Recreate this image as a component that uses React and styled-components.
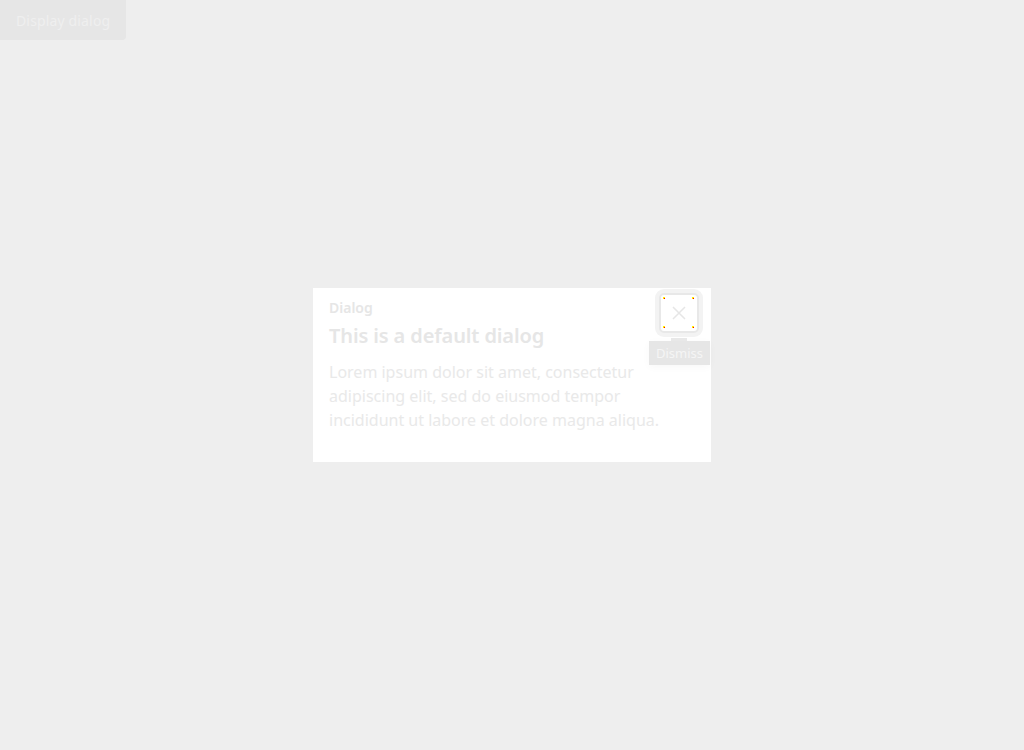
import React from "react";
import styled, { createGlobalStyle } from "styled-components";

const Global = createGlobalStyle`
  html, body { margin: 0; padding: 0; background: #eeeeee; }
  body { font-family: "Noto Sans", "Open Sans", sans-serif; }
  #root { min-height: 100vh; }
  * { box-sizing: border-box; }
`;

const Page = styled.div`
  position: relative;
  width: 100%;
  height: 750px;
  background: #eeeeee;
`;

const TriggerButton = styled.button`
  display: block;
  height: 40px;
  padding: 0 16px;
  border: none;
  border-radius: 0 0 4px 0;
  background: #e6e6e6;
  color: #efefef;
  font-family: "Noto Sans", sans-serif;
  font-size: 14px;
  letter-spacing: 0.15px;
  cursor: pointer;
`;

const Overlay = styled.div`
  position: absolute;
  inset: 0;
  display: flex;
  align-items: center;
  justify-content: center;
`;

const DialogBox = styled.div`
  position: relative;
  width: 398px;
  height: 174px;
  background: #ffffff;
  padding: 10px 16px 16px 16px;
  display: flex;
  flex-direction: column;
`;

const Eyebrow = styled.div`
  font-size: 14px;
  font-weight: 600;
  line-height: 20px;
  color: #e6e6e6;
`;

const Title = styled.h2`
  margin: 4px 0 0 0;
  font-size: 20px;
  font-weight: 600;
  line-height: 28px;
  letter-spacing: -0.12px;
  color: #e6e6e6;
`;

const Body = styled.p`
  margin: 10px 0 0 0;
  font-size: 16px;
  line-height: 24px;
  color: #e9e9e9;
  width: 345px;
`;

const CloseWrap = styled.div`
  position: absolute;
  top: 5px;
  right: 1px;
  display: flex;
  flex-direction: column;
  align-items: center;
`;

const CloseButton = styled.button`
  position: relative;
  width: 40px;
  height: 40px;
  border: 2px solid #e8e8e8;
  border-radius: 5px;
  background: #ffffff;
  box-shadow: 0 0 0 4px #f3f3f3;
  display: flex;
  align-items: center;
  justify-content: center;
  padding: 0;
  cursor: pointer;
`;

const Dot = styled.span`
  position: absolute;
  width: 1px;
  height: 1px;
  background: #ff0000;
  box-shadow: -1px -1px 0 0 #ffee00, 0 -1px 0 0 #ffee00, -1px 0 0 0 #ffee00;
  ${(p) => (p.$top ? "top: 3px;" : "bottom: 3px;")}
  ${(p) => (p.$left ? "left: 3px;" : "right: 3px;")}
`;

const Tooltip = styled.div`
  position: relative;
  margin-top: 8px;
  padding: 0 7px;
  height: 24px;
  line-height: 24px;
  background: #e6e6e6;
  color: #f5f5f5;
  font-size: 13px;
  box-shadow: 0 2px 8px rgba(0, 0, 0, 0.03);
  white-space: nowrap;
  &::before {
    content: "";
    position: absolute;
    top: -3px;
    left: 50%;
    margin-left: -8px;
    width: 16px;
    height: 3px;
    background: #e8e8e8;
  }
`;

export default function App() {
  return (
    <>
      <Global />
      <Page>
        <TriggerButton>Display dialog</TriggerButton>
        <Overlay>
          <DialogBox role="dialog">
            <Eyebrow>Dialog</Eyebrow>
            <Title>This is a default dialog</Title>
            <Body>
              Lorem ipsum dolor sit amet, consectetur adipiscing elit, sed do
              eiusmod tempor incididunt ut labore et dolore magna aliqua.
            </Body>
            <CloseWrap>
              <CloseButton aria-label="Dismiss">
                <Dot $top $left />
                <Dot $top />
                <Dot $left />
                <Dot />
                <svg width="14" height="14" viewBox="0 0 14 14">
                  <path
                    d="M1 1 L13 13 M13 1 L1 13"
                    stroke="#e6e6e6"
                    strokeWidth="1.5"
                    fill="none"
                  />
                </svg>
              </CloseButton>
              <Tooltip>Dismiss</Tooltip>
            </CloseWrap>
          </DialogBox>
        </Overlay>
      </Page>
    </>
  );
}
